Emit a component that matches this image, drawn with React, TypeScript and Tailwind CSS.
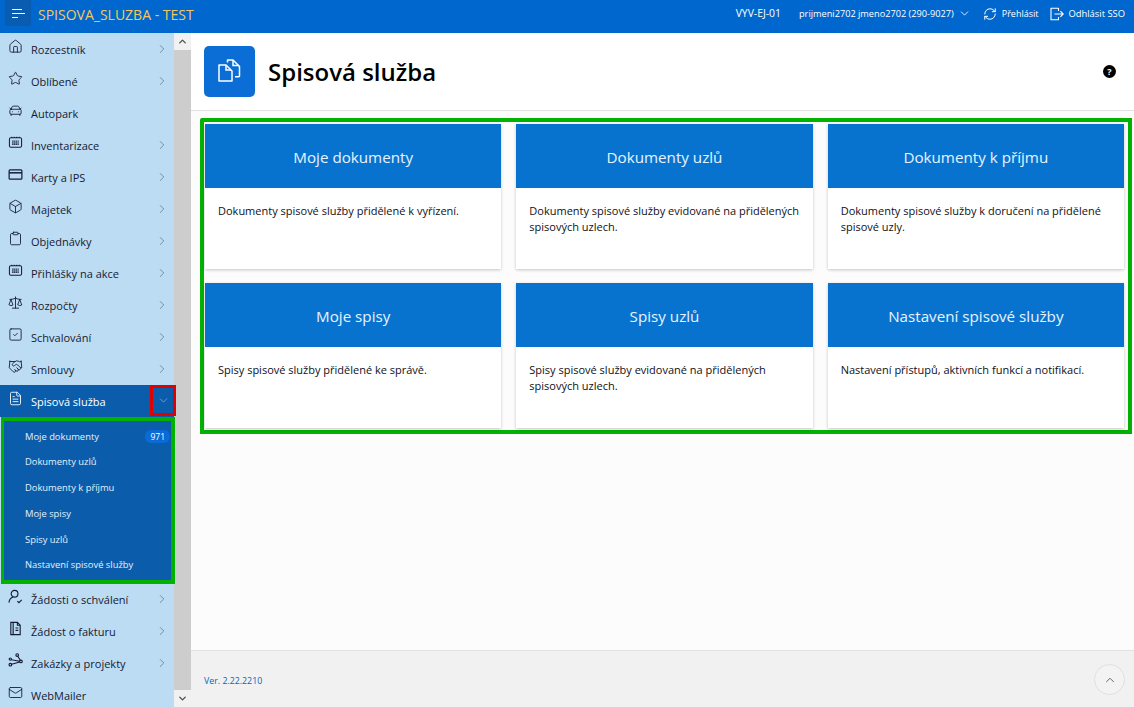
import {
  Home,
  Star,
  CarFront,
  Box,
  Clipboard,
  Scale,
  SquareCheck,
  Handshake,
  FileText,
  Mail,
  ChevronRight,
  ChevronDown,
  ChevronUp,
  RefreshCw,
} from "lucide-react";
import type { ComponentType } from "react";

type IconType = ComponentType<{ className?: string; strokeWidth?: number }>;
type SvgProps = { className?: string; strokeWidth?: number };

function TableCalendar({ className }: SvgProps) {
  return (
    <svg viewBox="0 0 16 16" fill="none" stroke="currentColor" strokeWidth="1.1" className={className}>
      <rect x="1.5" y="3" width="13" height="10" rx="1.5" />
      <path d="M4 1.8v1.4M6.7 1.8v1.4M9.3 1.8v1.4M12 1.8v1.4" />
      <path d="M4.5 6.5h7M4.5 8.3h7M4.5 10.1h7" strokeWidth="1.3" strokeDasharray="1.4 .7" />
    </svg>
  );
}

function CardIcon({ className }: SvgProps) {
  return (
    <svg viewBox="0 0 16 16" fill="none" stroke="currentColor" strokeWidth="1.3" className={className}>
      <rect x="1.2" y="3" width="13.6" height="10" rx="1" />
      <path d="M1.2 6.2h13.6" strokeWidth="1.6" />
    </svg>
  );
}

function InvoiceDoc({ className }: SvgProps) {
  return (
    <svg viewBox="0 0 16 16" fill="none" stroke="currentColor" strokeWidth="1.2" className={className}>
      <path d="M3 1.5h7l3 3v10H3z" />
      <path d="M5.5 1.5v13M10 1.5v3h3M8 7.5h3M8 10h3" />
    </svg>
  );
}

function UserApprove({ className }: SvgProps) {
  return (
    <svg viewBox="0 0 16 16" fill="none" stroke="currentColor" strokeWidth="1.2" className={className}>
      <circle cx="7" cy="5" r="3.6" />
      <path d="M1 14.5c.4-3 2.4-5.4 4.6-6M10 13l1.6 1.5 3-3" />
    </svg>
  );
}

function NodesIcon({ className }: SvgProps) {
  return (
    <svg viewBox="0 0 16 16" fill="none" stroke="currentColor" strokeWidth="1.2" className={className}>
      <circle cx="2.5" cy="12.5" r="1.4" />
      <circle cx="9.8" cy="2.2" r="1.4" />
      <circle cx="13.8" cy="9" r="1.4" />
      <circle cx="2.5" cy="6.5" r="1.2" />
      <path d="M3.6 7.2 12.5 8.8M3.8 12 12.6 9.6M10.4 3.4 13.2 7.8" />
    </svg>
  );
}

function FilesIcon({ className }: SvgProps) {
  return (
    <svg viewBox="0 0 24 23" fill="none" stroke="currentColor" strokeWidth="1.5" className={className}>
      <path d="M1 6h7l6 6v10H1z" strokeLinejoin="round" />
      <path d="M8 6.5v4.5h5" />
      <path d="M9.5 3.5V1h5.5l6.5 6.5v9.5a.8.8 0 0 1-.8.8H17" strokeLinejoin="round" />
      <path d="M15 1.5v5h5.5" />
    </svg>
  );
}

function LogoutDoc({ className }: SvgProps) {
  return (
    <svg viewBox="0 0 14 14" fill="none" stroke="currentColor" strokeWidth="1.1" className={className}>
      <path d="M8.5 4V1.2H1v11.6h7.5V10" strokeLinejoin="round" />
      <path d="M4.5 7h8.7M10.4 4.2 13.2 7l-2.8 2.8" />
    </svg>
  );
}

type MenuItem = { label: string; icon: IconType; arrow?: boolean };

const topItems: MenuItem[] = [
  { label: "Rozcestník", icon: Home, arrow: true },
  { label: "Oblíbené", icon: Star, arrow: true },
  { label: "Autopark", icon: CarFront },
  { label: "Inventarizace", icon: TableCalendar, arrow: true },
  { label: "Karty a IPS", icon: CardIcon, arrow: true },
  { label: "Majetek", icon: Box, arrow: true },
  { label: "Objednávky", icon: Clipboard, arrow: true },
  { label: "Přihlášky na akce", icon: TableCalendar, arrow: true },
  { label: "Rozpočty", icon: Scale, arrow: true },
  { label: "Schvalování", icon: SquareCheck, arrow: true },
  { label: "Smlouvy", icon: Handshake, arrow: true },
];

const bottomItems: MenuItem[] = [
  { label: "Žádosti o schválení", icon: UserApprove, arrow: true },
  { label: "Žádost o fakturu", icon: InvoiceDoc, arrow: true },
  { label: "Zakázky a projekty", icon: NodesIcon, arrow: true },
  { label: "WebMailer", icon: Mail },
];

const subItems = [
  "Moje dokumenty",
  "Dokumenty uzlů",
  "Dokumenty k příjmu",
  "Moje spisy",
  "Spisy uzlů",
  "Nastavení spisové služby",
];

const cards = [
  { title: "Moje dokumenty", text: "Dokumenty spisové služby přidělené k vyřízení." },
  { title: "Dokumenty uzlů", text: "Dokumenty spisové služby evidované na přidělených spisových uzlech." },
  { title: "Dokumenty k příjmu", text: "Dokumenty spisové služby k doručení na přidělené spisové uzly." },
  { title: "Moje spisy", text: "Spisy spisové služby přidělené ke správě." },
  { title: "Spisy uzlů", text: "Spisy spisové služby evidované na přidělených spisových uzlech." },
  { title: "Nastavení spisové služby", text: "Nastavení přístupů, aktivních funkcí a notifikací." },
];

function SideRow({ item }: { item: MenuItem }) {
  const Icon = item.icon;
  return (
    <div className="flex h-8 shrink-0 items-center text-[#141b33]">
      <div className="flex w-[31px] shrink-0 justify-center pb-[5px] pr-[1px]">
        <Icon className="h-[15px] w-[15px]" strokeWidth={1.4} />
      </div>
      <span className="flex-1 pt-[3px] text-[11px]">{item.label}</span>
      {item.arrow && <ChevronRight className="mr-[5px] mb-[1px] h-[14px] w-[14px] text-[#66737f]" strokeWidth={1.3} />}
    </div>
  );
}

export default function App() {
  return (
    <div className="flex h-[707px] w-[1134px] flex-col overflow-hidden bg-[#fcfcfc] font-['Open_Sans',sans-serif] text-black">
      {/* Top bar */}
      <header className="flex h-[33px] shrink-0 items-center bg-[#0067ce] text-white">
        <button className="ml-[5px] flex h-[26px] w-[26px] self-start items-center justify-center bg-[#0a5cb0]">
          <svg viewBox="0 0 13 9" className="h-[9px] w-[13px]" stroke="white" strokeWidth="1">
            <path d="M0 .5h10M0 4.5h13M0 8.5h6" />
          </svg>
        </button>
        <span className="ml-[7px] pb-[5px] text-[14px] text-[#f5c85c]">SPISOVA_SLUZBA - TEST</span>
        <div className="ml-auto flex items-center pb-[5px] pr-[9px] text-[9.2px]">
          <span className="text-[10.4px]">VYV-EJ-01</span>
          <span className="ml-[18px]">prijmeni2702 jmeno2702 (290-9027)</span>
          <ChevronDown className="ml-[4px] h-[13px] w-[13px]" strokeWidth={1.6} />
          <RefreshCw className="ml-[12px] h-[14px] w-[14px]" strokeWidth={1.7} />
          <span className="ml-[5px] text-[9px]">Přehlásit</span>
          <LogoutDoc className="ml-[12px] h-[14px] w-[14px]" />
          <span className="ml-[4px] text-[9.4px]">Odhlásit SSO</span>
        </div>
      </header>

      <div className="flex min-h-0 flex-1">
        {/* Sidebar */}
        <aside className="relative z-10 w-[174px] shrink-0 bg-[#bcdcf4]">
          {topItems.map((item) => (
            <SideRow key={item.label} item={item} />
          ))}
          <div className="relative flex h-8 items-center bg-[#0b5dab] text-white">
            <div className="flex w-[31px] shrink-0 justify-center pb-[5px] pr-[1px]">
              <FileText className="h-[15px] w-[15px]" strokeWidth={1.4} />
            </div>
            <span className="flex-1 pt-[3px] text-[11px]">Spisová služba</span>
            <div className="absolute left-[150px] top-0 flex h-[31px] w-[26px] items-center justify-center border-[3px] border-[#e00000]">
              <ChevronDown className="h-[13px] w-[13px] text-[#8fb4d8]" strokeWidth={1.3} />
            </div>
          </div>
          <div className="relative z-10 mb-[-1px] ml-[1px] mr-[-1px] border-4 border-l-[3px] border-[#02b102] bg-[#0b5dab] pb-[2px] pt-[3px] text-[#e4f0fb]">
            {subItems.map((label, i) => (
              <div key={label} className="flex h-[25.7px] items-center pl-[21px] text-[9.4px]">
                <span className="flex-1">{label}</span>
                {i === 0 && (
                  <span className="mb-[1px] mr-[1px] rounded-[6px] bg-[#0a6bd6] px-[5px] text-[8.5px] leading-[13px] text-white">971</span>
                )}
              </div>
            ))}
          </div>
          {bottomItems.map((item) => (
            <SideRow key={item.label} item={item} />
          ))}
        </aside>

        {/* Sidebar scrollbar */}
        <div className="flex w-[17px] shrink-0 flex-col bg-[#cdcdcd]">
          <div className="flex h-[17px] items-center justify-center bg-[#f1f1f1]">
            <ChevronUp className="h-[11px] w-[11px] text-[#505050]" strokeWidth={3} />
          </div>
          <div className="flex-1" />
          <div className="flex h-[17px] items-center justify-center bg-[#f1f1f1]">
            <ChevronDown className="h-[11px] w-[11px] text-[#505050]" strokeWidth={3} />
          </div>
        </div>

        {/* Main */}
        <main className="flex min-w-0 flex-1 flex-col">
          <div className="flex h-[78px] shrink-0 items-center border-b border-[#e2e2e2] bg-white pl-[13px] pr-[18px]">
            <div className="flex h-[51px] w-[51px] items-center justify-center rounded-[5px] bg-[#0a6ed6]">
              <FilesIcon className="mb-[2px] h-[23px] w-[24px] text-white" />
            </div>
            <h1 className="ml-[13px] text-[24px] font-semibold">Spisová služba</h1>
            <div className="ml-auto flex h-[13px] w-[13px] items-center justify-center rounded-full bg-black">
              <span className="text-[9px] font-bold leading-none text-white">?</span>
            </div>
          </div>

          <div className="flex-1 pl-[9px] pr-[2px] pt-[7px]">
            <div className="grid grid-cols-3 gap-x-[15px] gap-y-[14px] rounded-tl-[2px] border-[4px] border-[#02b102] py-[2px] pl-[1px] pr-[4px]">
              {cards.map((card) => (
                <div key={card.title} className="h-[145px] bg-white shadow-[0_1px_3px_rgba(0,0,0,0.22)]">
                  <div className="flex h-16 items-center justify-center bg-[#0873cf] pt-[3px] text-[15.2px] text-[#e6f3ff]">
                    {card.title}
                  </div>
                  <p className="px-[13px] pt-[15px] text-[11px] leading-[16px] text-[#101018]">{card.text}</p>
                </div>
              ))}
            </div>
          </div>

          <footer className="flex h-[57px] shrink-0 items-center border-t border-[#e2e2e2] bg-[#f1f1f1] pl-[13px] pr-[9px]">
            <span className="mt-[5px] text-[8.8px] text-[#0a64bd]">Ver. 2.22.2210</span>
            <button className="ml-auto mt-[1px] flex h-[31px] w-[31px] items-center justify-center rounded-full border border-[#e0e0e0] bg-[#f3f3f3]">
              <ChevronUp className="h-[14px] w-[14px] text-[#555]" strokeWidth={1.5} />
            </button>
          </footer>
        </main>
      </div>
    </div>
  );
}
